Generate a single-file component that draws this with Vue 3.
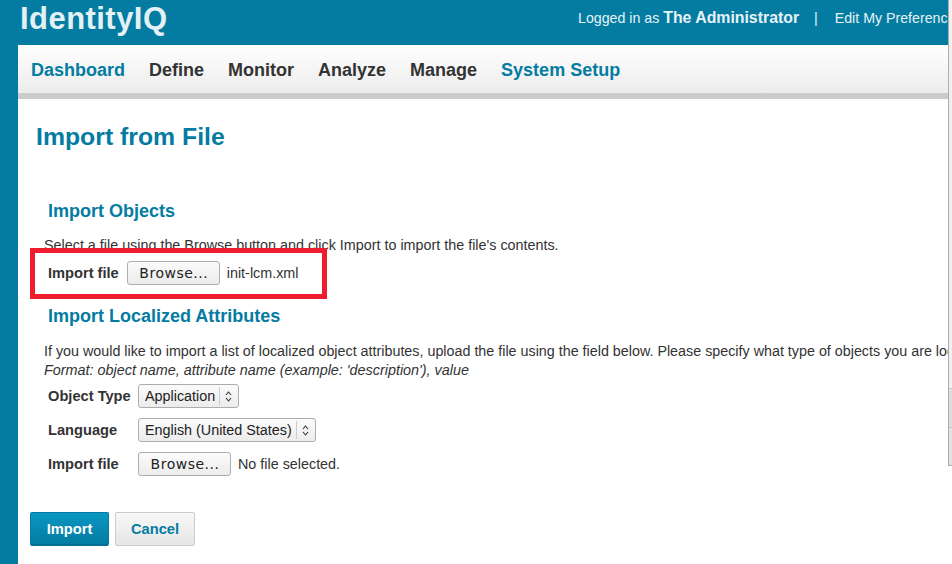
<template>
  <div class="page">
    <header class="top">
      <div class="logo">IdentityIQ</div>
      <div class="user">
        Logged in as <b>The Administrator</b>
        <span class="sep">|</span>
        <span>Edit My Preferences</span>
      </div>
    </header>
    <div class="shell">
      <nav class="nav">
        <a v-for="item in menu" :key="item.label" :class="{ on: item.on }">{{ item.label }}</a>
      </nav>
      <main class="body">
        <h1>Import from File</h1>

        <h2 class="first">Import Objects</h2>
        <p class="text">Select a file using the Browse button and click Import to import the file's contents.</p>
        <div class="row single">
          <label>Import file</label>
          <span class="browse">Browse...</span>
          <span class="fname">init-lcm.xml</span>
          <div class="mark"></div>
        </div>

        <h2 class="second">Import Localized Attributes</h2>
        <p class="text long">If you would like to import a list of localized object attributes, upload the file using the field below. Please specify what type of objects you are localizing and the language.</p>
        <p class="text long fmt">Format: object name, attribute name (example: 'description'), value</p>

        <div class="form">
          <label>Object Type</label>
          <div><span class="select">Application<i class="arrows"><svg width="7" height="11" viewBox="0 0 7 11"><path d="M1 4l2.5-3L6 4M1 7l2.5 3L6 7" fill="none" stroke="#333" stroke-width="1.1"/></svg></i></span></div>
          <label>Language</label>
          <div><span class="select">English (United States)<i class="arrows"><svg width="7" height="11" viewBox="0 0 7 11"><path d="M1 4l2.5-3L6 4M1 7l2.5 3L6 7" fill="none" stroke="#333" stroke-width="1.1"/></svg></i></span></div>
          <label>Import file</label>
          <div class="file"><span class="browse">Browse...</span><span class="fname">No file selected.</span></div>
        </div>

        <div class="actions">
          <button class="primary">Import</button>
          <button class="plain">Cancel</button>
        </div>
      </main>
    </div>
    <div class="edge">
      <div class="seg a"></div>
      <div class="seg b"></div>
      <div class="seg c"></div>
    </div>
  </div>
</template>

<script setup>
const menu = [
  { label: "Dashboard", on: true },
  { label: "Define" },
  { label: "Monitor" },
  { label: "Analyze" },
  { label: "Manage" },
  { label: "System Setup", on: true },
];
</script>

<style>
html, body {
  margin: 0;
  overflow: hidden;
  background: #fff;
}
</style>

<style scoped>
.page {
  position: relative;
  width: 952px;
  height: 564px;
  overflow: hidden;
  background: #047ca2;
  font-family: "Liberation Sans", Arial, sans-serif;
  font-size: 14.35px;
  color: #333;
}
.top {
  height: 45px;
  white-space: nowrap;
  color: #e6f2f6;
}
.logo {
  margin-left: 20px;
  font-size: 31px;
  line-height: 37px;
  font-weight: 700;
  letter-spacing: 0.45px;
  color: #e3f0f4;
}
.user {
  position: absolute;
  left: 578px;
  top: 9px;
  font-size: 14.2px;
  line-height: 18px;
}
.user b {
  font-size: 15.85px;
}
.sep {
  margin: 0 17px 0 15px;
}
.shell {
  margin-left: 18px;
  height: 519px;
  background: #fff;
  border-top-left-radius: 2px;
}
.nav {
  box-sizing: border-box;
  height: 54px;
  display: flex;
  align-items: center;
  gap: 24px;
  padding: 2px 0 0 13px;
  background: linear-gradient(#fff, #ececec);
  border-bottom: 6px solid #ccc;
  font-size: 18px;
  font-weight: 700;
}
.nav .on {
  color: #047ca2;
}
.body {
  padding-left: 12px;
}
h1 {
  margin: 0;
  padding: 23px 0 0 6px;
  font-size: 24.8px;
  line-height: 30px;
  font-weight: 700;
  color: #047ca2;
}
h2 {
  margin: 0;
  padding-left: 18px;
  font-size: 18px;
  line-height: 22px;
  font-weight: 700;
  color: #047ca2;
}
h2.first {
  margin-top: 48px;
}
h2.second {
  margin-top: 19px;
}
.text {
  margin: 0;
  padding-left: 14px;
  line-height: 18px;
  white-space: nowrap;
}
h2.first + .text {
  margin-top: 14px;
}
.long {
  margin-top: 15px;
  font-size: 14.32px;
}
.fmt {
  margin-top: 1px;
  font-size: 14.38px;
  font-style: italic;
}
.row {
  position: relative;
  display: flex;
  align-items: center;
  height: 26px;
  padding-left: 18px;
  margin-top: 6px;
}
label {
  font-size: 14.65px;
  font-weight: 700;
}
.single label {
  margin-right: 8px;
}
.browse {
  box-sizing: border-box;
  display: inline-block;
  height: 24px;
  width: 93px;
  padding-left: 1px;
  line-height: 22px;
  text-align: center;
  border: 1px solid #adadad;
  border-radius: 3px;
  background: linear-gradient(#fbfbfb, #ececec);
  font-family: "DejaVu Sans", sans-serif;
  font-size: 14px;
  letter-spacing: 0.5px;
  color: #222;
}
.fname {
  margin-left: 7px;
}
.mark {
  position: absolute;
  left: 0;
  top: -12px;
  width: 287px;
  height: 41px;
  border: 5px solid #ee1c2e;
}
.form {
  display: grid;
  grid-template-columns: 90px auto;
  justify-content: start;
  grid-auto-rows: 34px;
  align-items: center;
  padding-left: 18px;
}
.select {
  box-sizing: border-box;
  display: inline-flex;
  align-items: center;
  height: 24px;
  padding-left: 6px;
  border: 1px solid #adadad;
  border-radius: 3px;
  background: linear-gradient(#fbfbfb, #ececec);
  color: #222;
}
.arrows {
  display: flex;
  align-items: center;
  height: 18px;
  margin-left: 4px;
  padding: 0 6px 0 5px;
  border-left: 1px solid #ccc;
}
.file {
  display: flex;
  align-items: center;
}
.actions {
  display: flex;
  gap: 6px;
  margin-top: 31px;
}
button {
  box-sizing: border-box;
  height: 34px;
  padding: 0;
  font-family: inherit;
  font-size: 14.7px;
  font-weight: 700;
  border-radius: 2px;
}
.primary {
  width: 79px;
  color: #fff;
  background: linear-gradient(#0a97c2, #047ca2);
  border: 1px solid #047ca2;
  border-bottom: 2px solid #036f92;
}
.plain {
  width: 80px;
  color: #047ca2;
  background: linear-gradient(#f8f8f8, #e6e6e6);
  border: 1px solid #ccc;
}
.edge {
  position: absolute;
  left: 948px;
  top: 0;
  width: 4px;
  height: 466px;
  box-sizing: border-box;
  display: flex;
  flex-direction: column;
  border-left: 1px solid #b0acaa;
  border-bottom: 1px solid #b0acaa;
}
.seg.a {
  height: 388px;
  background: #f0f0f0;
}
.seg.b {
  height: 39px;
  box-sizing: border-box;
  background: #dedede;
  border-top: 1px solid #c8c8c8;
}
.seg.c {
  flex: 1;
  background: #e2e2e2;
  border-top: 1px solid #c8c8c8;
}
</style>
